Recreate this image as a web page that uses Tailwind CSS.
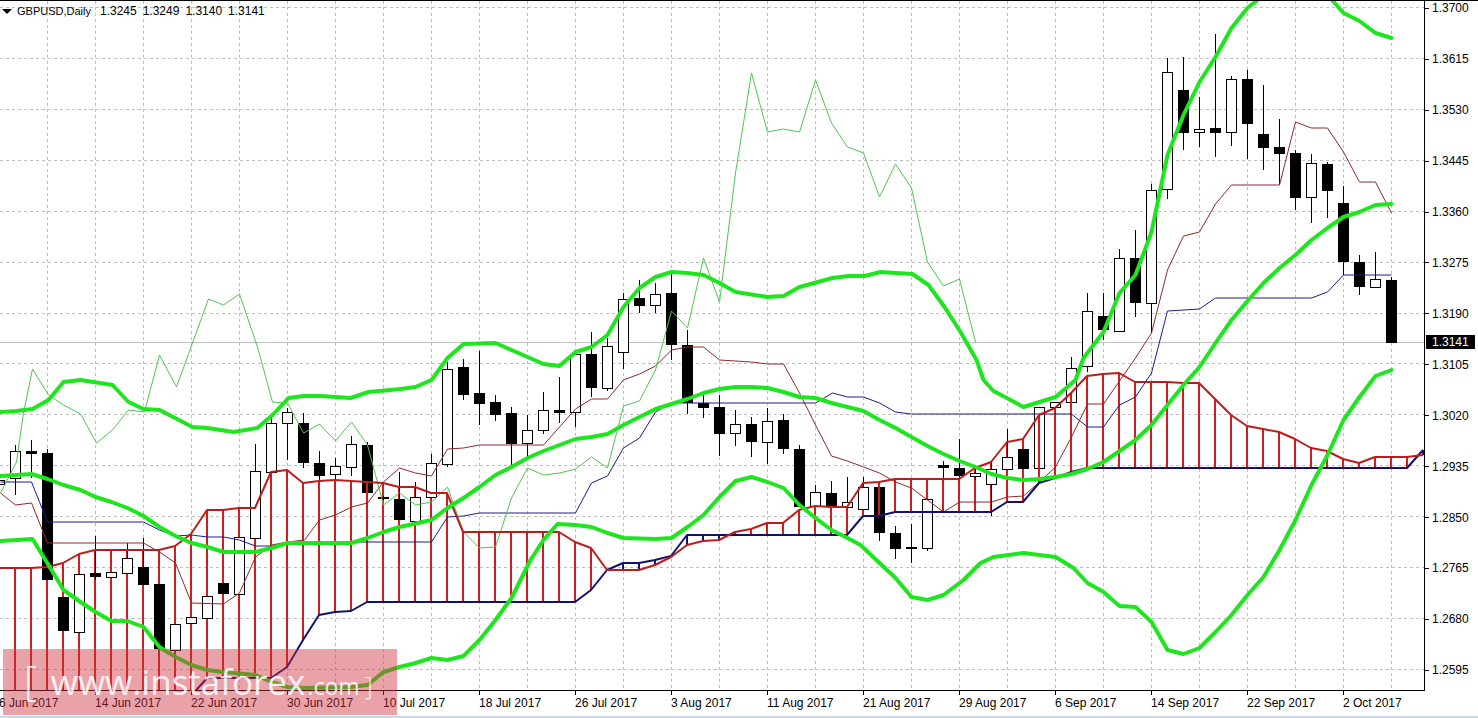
<!DOCTYPE html>
<html lang="en">
<head>
    <meta charset="UTF-8">
    <title>GBPUSD,Daily</title>
    <script src="https://cdn.jsdelivr.net/npm/@tailwindcss/browser@4"></script>
</head>
<body class="bg-white overflow-hidden">
<div class="relative flex flex-col w-[1478px] h-[718px] overflow-hidden font-['Liberation_Sans',sans-serif] text-xs text-black">
    <div class="h-px bg-black"></div>

    <div class="flex h-[690px] shrink-0">
        <!-- chart -->
        <div class="relative w-[1425px] h-[690px] border-r border-b border-black overflow-hidden">
            <svg viewBox="0 1 1424 689" width="1424" height="689" class="block">
                <g id="grid" class="fill-none stroke-[#c0c0c0] stroke-1" stroke-dasharray="3 3"></g>
                <path d="M0 342.5H1424" class="fill-none stroke-[#c0c0c0] stroke-1"/>
                <path id="hatchRed" class="fill-none stroke-[#cc1f1f] stroke-2"/>
                <path id="hatchBlue" class="fill-none stroke-[#14146e] stroke-2"/>
                <g id="candles" class="stroke-black stroke-1"></g>
                <path id="hatchOver" class="fill-none stroke-[#cc1f1f] stroke-2"/>
                <polyline id="tenkan" class="fill-none stroke-[#8e2a2a] stroke-1" stroke-linejoin="round"/>
                <polyline id="kijun" class="fill-none stroke-[#1c1c86] stroke-1" stroke-linejoin="round"/>
                <polyline id="chikou" class="fill-none stroke-[#52c452] stroke-1" stroke-linejoin="round"/>
                <polyline id="spanB" class="fill-none stroke-[#12126e] stroke-2" stroke-linejoin="round"/>
                <polyline id="spanA" class="fill-none stroke-[#bc1c1c] stroke-2" stroke-linejoin="round"/>
                <polyline id="bbUp1" class="fill-none stroke-[#1ee61e] stroke-4" stroke-linejoin="round" stroke-linecap="round"/>
                <polyline id="bbUp2" class="fill-none stroke-[#1ee61e] stroke-4" stroke-linejoin="round" stroke-linecap="round"/>
                <polyline id="bbMid" class="fill-none stroke-[#1ee61e] stroke-4" stroke-linejoin="round" stroke-linecap="round"/>
                <polyline id="bbLow" class="fill-none stroke-[#1ee61e] stroke-4" stroke-linejoin="round" stroke-linecap="round"/>
            </svg>
            <!-- symbol line -->
            <div class="absolute left-[2px] top-[3px] flex items-center h-[14px]">
                <span class="w-0 h-0 border-x-[5px] border-x-transparent border-t-[5px] border-t-black"></span>
                <span class="ml-[5px] text-[11px]">GBPUSD,Daily</span>
                <span class="ml-[9px] flex gap-[6px]">
                    <span>1.3245</span><span>1.3249</span><span>1.3140</span><span>1.3141</span>
                </span>
            </div>
        </div>

        <!-- price axis -->
        <div class="relative flex-1">
            <div class="flex flex-col -mt-[18px]">
                <div class="flex items-center h-[50.92px] shrink-0"><span class="w-1 h-px bg-black"></span><span class="ml-[3px]">1.3700</span></div>
                <div class="flex items-center h-[50.92px] shrink-0"><span class="w-1 h-px bg-black"></span><span class="ml-[3px]">1.3615</span></div>
                <div class="flex items-center h-[50.92px] shrink-0"><span class="w-1 h-px bg-black"></span><span class="ml-[3px]">1.3530</span></div>
                <div class="flex items-center h-[50.92px] shrink-0"><span class="w-1 h-px bg-black"></span><span class="ml-[3px]">1.3445</span></div>
                <div class="flex items-center h-[50.92px] shrink-0"><span class="w-1 h-px bg-black"></span><span class="ml-[3px]">1.3360</span></div>
                <div class="flex items-center h-[50.92px] shrink-0"><span class="w-1 h-px bg-black"></span><span class="ml-[3px]">1.3275</span></div>
                <div class="flex items-center h-[50.92px] shrink-0"><span class="w-1 h-px bg-black"></span><span class="ml-[3px]">1.3190</span></div>
                <div class="flex items-center h-[50.92px] shrink-0"><span class="w-1 h-px bg-black"></span><span class="ml-[3px]">1.3105</span></div>
                <div class="flex items-center h-[50.92px] shrink-0"><span class="w-1 h-px bg-black"></span><span class="ml-[3px]">1.3020</span></div>
                <div class="flex items-center h-[50.92px] shrink-0"><span class="w-1 h-px bg-black"></span><span class="ml-[3px]">1.2935</span></div>
                <div class="flex items-center h-[50.92px] shrink-0"><span class="w-1 h-px bg-black"></span><span class="ml-[3px]">1.2850</span></div>
                <div class="flex items-center h-[50.92px] shrink-0"><span class="w-1 h-px bg-black"></span><span class="ml-[3px]">1.2765</span></div>
                <div class="flex items-center h-[50.92px] shrink-0"><span class="w-1 h-px bg-black"></span><span class="ml-[3px]">1.2680</span></div>
                <div class="flex items-center h-[50.92px] shrink-0"><span class="w-1 h-px bg-black"></span><span class="ml-[3px]">1.2595</span></div>
            </div>
            <div class="absolute left-px top-[334px] w-[49px] h-[14px] bg-black text-white flex items-center pl-[6px]">1.3141</div>
        </div>
    </div>

    <!-- time axis -->
    <div class="flex h-[25px] shrink-0 -ml-px">
        <div class="w-24 shrink-0"><div class="w-px h-1 bg-black"></div><div class="whitespace-nowrap">6 Jun 2017</div></div>
        <div class="w-24 shrink-0"><div class="w-px h-1 bg-black"></div><div class="whitespace-nowrap">14 Jun 2017</div></div>
        <div class="w-24 shrink-0"><div class="w-px h-1 bg-black"></div><div class="whitespace-nowrap">22 Jun 2017</div></div>
        <div class="w-24 shrink-0"><div class="w-px h-1 bg-black"></div><div class="whitespace-nowrap">30 Jun 2017</div></div>
        <div class="w-24 shrink-0"><div class="w-px h-1 bg-black"></div><div class="whitespace-nowrap">10 Jul 2017</div></div>
        <div class="w-24 shrink-0"><div class="w-px h-1 bg-black"></div><div class="whitespace-nowrap">18 Jul 2017</div></div>
        <div class="w-24 shrink-0"><div class="w-px h-1 bg-black"></div><div class="whitespace-nowrap">26 Jul 2017</div></div>
        <div class="w-24 shrink-0"><div class="w-px h-1 bg-black"></div><div class="whitespace-nowrap">3 Aug 2017</div></div>
        <div class="w-24 shrink-0"><div class="w-px h-1 bg-black"></div><div class="whitespace-nowrap">11 Aug 2017</div></div>
        <div class="w-24 shrink-0"><div class="w-px h-1 bg-black"></div><div class="whitespace-nowrap">21 Aug 2017</div></div>
        <div class="w-24 shrink-0"><div class="w-px h-1 bg-black"></div><div class="whitespace-nowrap">29 Aug 2017</div></div>
        <div class="w-24 shrink-0"><div class="w-px h-1 bg-black"></div><div class="whitespace-nowrap">6 Sep 2017</div></div>
        <div class="w-24 shrink-0"><div class="w-px h-1 bg-black"></div><div class="whitespace-nowrap">14 Sep 2017</div></div>
        <div class="w-24 shrink-0"><div class="w-px h-1 bg-black"></div><div class="whitespace-nowrap">22 Sep 2017</div></div>
        <div class="w-24 shrink-0"><div class="w-px h-1 bg-black"></div><div class="whitespace-nowrap">2 Oct 2017</div></div>
    </div>
    <div class="flex-1 bg-[#c9d7e6]"></div>

    <!-- watermark -->
    <div class="absolute left-[3px] top-[649px] w-[394px] h-[66px] bg-[#d03040]/45 flex items-baseline text-white/85 font-['Open_Sans',sans-serif] whitespace-nowrap pl-[21px] pt-[9px]">
        <span class="text-[40px] leading-[44px] font-light">[</span>
        <span class="ml-[14px] text-[35px] leading-[44px]">www.instaforex</span>
        <span class="ml-[2px] text-[23px] leading-[44px]">.com</span>
        <span class="ml-[5px] text-[26px] leading-[44px] font-light">]</span>
    </div>
</div>

<script>
    const NS = "http://www.w3.org/2000/svg";
    const cx = i => 16 * i - 1;

    // high, body top, body bottom, low, black?
    const candles = [
        [478,480,484,486,0],[445,451,478,495,0],[440,451,454,478,1],[449,453,580,580,1],[597,597,631,631,1],
        [574,574,632,632,0],[536,573,577,580,1],[572,572,577,577,0],[543,558,573,573,0],[538,567,585,585,1],
        [584,584,649,649,1],[624,624,650,650,0],[617,617,623,623,0],[596,596,618,618,0],[583,583,594,594,1],
        [537,537,594,594,0],[444,471,538,538,0],[418,423,472,472,0],[408,412,423,460,0],[413,423,463,468,1],
        [451,463,476,480,1],[458,466,474,480,0],[436,444,467,476,0],[442,445,493,493,1],[496,497,499,500,1],
        [472,499,520,520,1],[482,497,521,521,0],[454,463,497,497,0],[362,369,464,467,0],[359,367,395,400,1],
        [351,393,404,425,1],[395,402,415,421,1],[407,413,444,467,1],[415,430,443,456,0],[392,410,430,434,0],
        [377,410,413,423,1],[354,354,412,427,0],[332,354,388,397,1],[338,346,388,391,0],[293,299,352,369,0],
        [280,298,306,313,1],[283,294,305,313,0],[274,293,345,360,1],[330,345,403,414,1],[393,403,408,418,1],
        [395,407,434,456,1],[410,424,433,446,0],[417,424,442,457,1],[408,421,442,464,0],[414,420,449,454,1],
        [445,449,507,507,1],[485,492,506,506,0],[481,493,507,507,1],[477,502,507,507,0],[477,487,509,509,0],
        [487,487,533,541,1],[526,533,549,559,1],[524,547,548,563,0],[499,499,548,551,0],[461,465,468,478,1],
        [439,468,476,480,1],[465,473,476,480,0],[462,469,484,516,0],[429,457,469,469,0],[449,449,469,469,1],
        [407,407,468,468,0],[402,402,407,407,0],[357,368,402,402,0],[293,311,366,372,0],[293,316,330,340,1],
        [249,258,331,332,0],[230,258,303,317,1],[184,190,303,333,0],[58,72,189,199,0],[57,90,133,150,1],
        [97,129,132,147,0],[34,128,133,157,1],[76,79,132,146,0],[70,79,124,159,1],[85,134,148,170,1],
        [119,147,154,185,1],[150,153,198,210,1],[154,163,197,223,0],[162,164,191,218,1],[186,203,262,275,1],
        [255,262,287,295,1],[252,279,287,287,0],[277,280,343,343,1]
    ];

    const spanA = [
        568,568,568,567,563,554,550,550,550,550,
        550,546,534,510,510,508,508,472,470,483,
        481,480,481,482,483,487,487,493,493,532,
        532,532,532,532,532,532,542,548,570,570,
        570,565,557,545,541,540,532,529,523,523,
        510,506,507,507,483,482,479,479,479,479,
        479,468,462,442,439,415,408,393,376,374,
        373,382,382,382,383,383,399,415,426,429,
        432,439,448,451,459,463,457,457,457,455
    ];
    const spanB = [
        700,700,700,700,700,700,700,700,700,700,
        700,700,696,678,678,678,678,678,667,640,
        615,612,611,602,602,602,602,602,602,602,
        602,602,602,602,602,602,602,590,570,563,
        563,560,556,535,535,535,535,535,535,535,
        535,535,535,535,516,516,512,512,512,512,
        512,512,512,502,502,483,478,472,468,468,
        468,468,468,468,468,468,468,468,468,468,
        468,468,468,468,468,468,468,468,468,450
    ];

    const lines = {
        tenkan: [0,493,15,505,31,503,47,543,143,543,159,552,175,563,191,603,223,604,239,593,255,557,271,545,287,542,
            304,540,319,520,335,515,351,507,367,503,383,482,399,468,415,473,431,476,447,449,463,448,479,445,543,445,
            559,427,575,409,591,399,607,399,623,380,639,374,655,366,671,350,687,347,703,347,719,360,751,362,767,364,
            783,364,799,393,815,425,831,456,847,461,863,467,879,473,895,482,911,488,927,500,943,512,959,502,991,502,
            1007,497,1023,496,1039,482,1055,467,1071,437,1087,404,1103,404,1119,381,1135,358,1151,333,1167,270,
            1183,236,1199,232,1215,204,1231,185,1279,185,1295,122,1311,128,1327,128,1343,152,1359,182,1375,182,1391,213],
        kijun: [0,482,31,482,47,522,143,522,159,530,175,536,191,535,207,537,223,537,239,540,255,546,271,546,287,542,
            431,542,447,517,463,516,479,513,575,513,591,483,607,476,623,448,639,438,655,412,671,403,815,403,832,393,
            847,397,863,397,879,403,895,412,911,414,1071,414,1087,427,1103,427,1119,405,1135,397,1151,373,1167,311,
            1199,309,1215,298,1311,298,1327,292,1343,275,1391,275],
        chikou: [0,493,16,462,23,413,32,369,48,395,63,405,80,414,96,443,112,430,128,410,144,412,159,355,176,387,192,343,
            208,299,223,305,239,294,257,347,272,402,287,403,303,433,319,424,335,441,351,422,367,445,383,505,399,493,
            415,505,431,502,447,487,463,532,479,548,495,547,511,498,527,468,543,475,559,473,575,469,591,457,607,468,
            623,406,639,401,655,370,671,311,687,328,703,258,719,302,735,173,751,73,767,132,783,129,799,132,815,80,
            831,123,847,147,863,153,879,197,895,164,911,188,927,262,943,286,959,279,975,342],
        bbUp1: [0,412,16,411,32,409,48,400,63,382,80,380,112,385,128,402,143,409,159,410,192,427,207,428,233,432,257,428,
            272,415,288,398,303,396,320,396,350,398,368,392,400,389,415,387,431,380,447,358,463,344,495,343,511,350,
            543,364,559,366,575,352,591,347,607,335,623,307,639,288,655,277,671,272,687,273,703,275,719,283,735,292,
            767,297,783,296,799,287,832,278,848,276,864,276,880,272,896,273,912,274,928,285,944,307,960,332,976,360,
            983,380,993,391,1023,407,1055,397,1075,380,1083,358,1103,332,1119,293,1135,275,1151,232,1167,155,1183,115,
            1199,82,1215,57,1231,28,1247,8,1262,-4],
        bbUp2: [1328,-4,1343,13,1359,21,1375,33,1391,38],
        bbMid: [0,476,31,474,47,479,63,485,80,490,95,497,111,502,127,508,143,516,159,527,175,536,191,543,207,547,223,552,
            255,552,271,548,287,543,303,543,351,543,367,538,383,532,399,527,431,520,447,508,463,498,479,487,495,475,
            511,467,527,458,543,451,559,445,575,439,591,437,607,434,623,425,639,417,655,409,671,404,687,399,703,393,
            719,389,735,387,751,387,767,388,783,392,799,397,815,398,831,403,847,407,863,411,879,420,895,428,911,437,
            927,446,943,454,959,461,975,467,991,474,1007,478,1023,480,1039,479,1055,477,1071,474,1087,469,1103,462,
            1119,451,1135,440,1151,425,1167,405,1183,385,1199,367,1215,343,1231,320,1247,301,1263,283,1279,268,
            1295,255,1311,240,1327,228,1343,217,1359,212,1375,205,1391,204],
        bbLow: [0,541,32,539,48,565,63,590,80,602,95,612,111,621,127,621,143,627,159,647,175,657,191,665,207,670,223,672,
            255,675,271,682,287,687,303,688,351,687,367,685,383,672,399,667,415,663,431,658,447,660,463,656,479,640,
            495,620,511,598,530,560,543,540,557,524,575,525,591,527,607,533,623,538,655,539,671,538,687,527,703,515,
            719,497,735,481,751,477,767,482,783,488,799,505,815,518,831,530,847,538,860,545,879,563,895,578,911,597,
            927,600,943,595,963,580,980,563,993,557,1023,553,1055,557,1073,568,1087,583,1103,592,1119,606,1135,607,
            1151,622,1167,650,1183,654,1199,648,1215,632,1231,615,1247,595,1263,577,1279,550,1295,520,1311,485,
            1327,455,1343,420,1359,397,1375,376,1391,370]
    };

    const toPoints = a => {
        let s = [];
        for (let k = 0; k < a.length; k += 2) s.push((a[k] + 0.5) + "," + a[k + 1]);
        return s.join(" ");
    };

    for (const id in lines) document.getElementById(id).setAttribute("points", toPoints(lines[id]));
    document.getElementById("spanA").setAttribute("points", spanA.map((y, i) => cx(i) + "," + y).join(" "));
    document.getElementById("spanB").setAttribute("points", spanB.map((y, i) => cx(i) + "," + y).join(" "));

    // grid
    let grid = "";
    for (let x = 47; x < 1424; x += 48) grid += `M${x + 0.5} 1V690`;
    for (let k = 0; k < 14; k++) grid += `M0 ${Math.round(7 + 50.92 * k) + 0.5}H1424`;
    const gridPath = document.createElementNS(NS, "path");
    gridPath.setAttribute("d", grid);
    document.getElementById("grid").appendChild(gridPath);

    // cloud hatch, navy where span A runs under span B
    const overCandles = [23, 55, 65, 67];
    let red = "", blue = "", over = "";
    spanA.forEach((a, i) => {
        const b = spanB[i], seg = `M${cx(i)} ${a}V${b}`;
        if (a > b) blue += seg;
        else if (overCandles.includes(i)) over += seg;
        else red += seg;
    });
    document.getElementById("hatchRed").setAttribute("d", red);
    document.getElementById("hatchBlue").setAttribute("d", blue);
    document.getElementById("hatchOver").setAttribute("d", over);

    // candles
    const group = document.getElementById("candles");
    candles.forEach((c, i) => {
        const x = cx(i), [hi, t, b, lo, black] = c;
        const wick = document.createElementNS(NS, "path");
        wick.setAttribute("d", `M${x + 0.5} ${hi}V${lo}`);
        wick.setAttribute("fill", "none");
        group.appendChild(wick);
        const body = document.createElementNS(NS, "rect");
        if (black) {
            body.setAttribute("x", x - 5);
            body.setAttribute("y", t);
            body.setAttribute("width", 11);
            body.setAttribute("height", b - t);
            body.setAttribute("stroke", "none");
            body.setAttribute("fill", "#000");
        } else {
            body.setAttribute("x", x - 4.5);
            body.setAttribute("y", t + 0.5);
            body.setAttribute("width", 10);
            body.setAttribute("height", b - t);
            body.setAttribute("fill", "#fff");
        }
        group.appendChild(body);
    });
</script>
</body>
</html>
